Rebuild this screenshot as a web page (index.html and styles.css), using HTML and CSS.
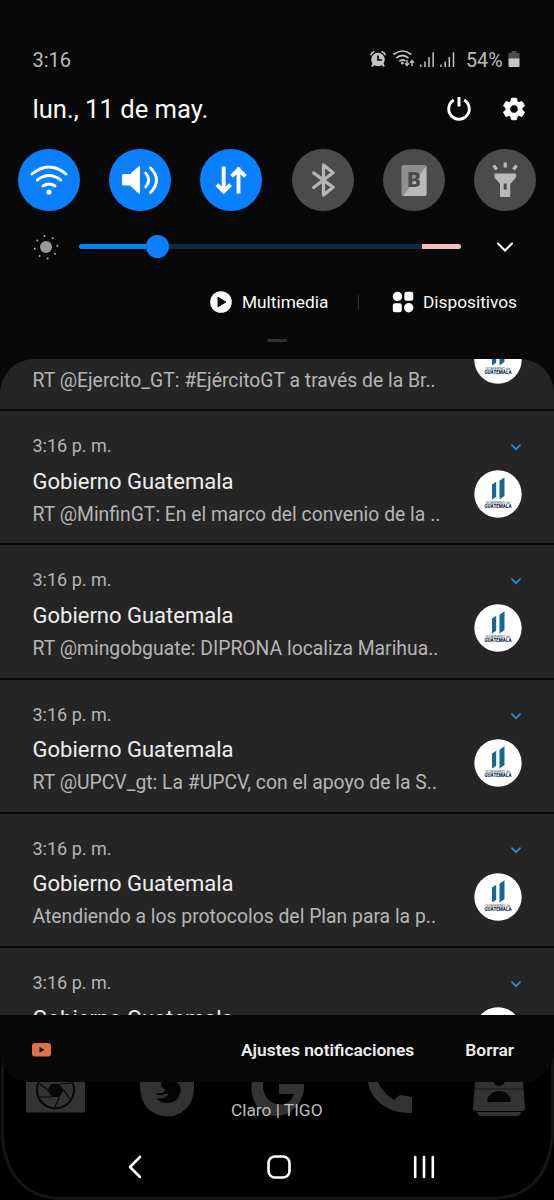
FILE: index.html
```html
<!DOCTYPE html>
<html lang="es">
<head>
<meta charset="utf-8">
<title>Notificaciones</title>
<link rel="stylesheet" href="styles.css">
</head>
<body>
<svg class="defs" width="0" height="0">
  <symbol id="avatar" viewBox="0 0 48 48">
    <circle cx="24" cy="24" r="23.7" fill="#fff"/>
    <path d="M18 14.500l4.200-2.700v15l-4.200 2.700zM25.500 10.700l5-3.400v18.800l-5 3.400z" fill="#17688f"/>
    <text x="11.500" y="34.200" font-size="3.800" textLength="25" lengthAdjust="spacingAndGlyphs" fill="#3f5066">GOBIERNO de</text>
    <text x="10.500" y="38.200" font-size="5" font-weight="900" textLength="27" lengthAdjust="spacingAndGlyphs" fill="#17314f">GUATEMALA</text>
  </symbol>
  <symbol id="chev" viewBox="0 0 12 8"><path d="M1.400 1.700L6 6.200l4.600-4.500" fill="none" stroke="#1f8fd6" stroke-width="1.800"/></symbol>
</svg>
<div class="phone">
  <header class="status">
    <span class="clock">3:16</span>
    <div class="status-icons">
      <svg width="98" height="20" viewBox="368 50 98 20">
        <g fill="#c4c4c4">
          <circle cx="378" cy="59.500" r="6.800"/>
          <path d="M372.500 63l2.200 2-2.400 2-1-1zM383.500 63l-2.200 2 2.400 2 1-1z"/>
        </g>
        <path d="M370.600 55.300q.8-2.800 3.800-3.700M385.400 55.300q-.8-2.800-3.800-3.700" stroke="#c4c4c4" stroke-width="1.600" fill="none"/>
        <path d="M378 55.500v4.500h4" stroke="#080808" stroke-width="1.700" fill="none"/>
        <g fill="none" stroke="#c4c4c4" stroke-width="1.700">
          <path d="M393.500 54.500q9-7 17.800 0M396.300 58q6.200-5 12.200 0M399.300 61.300q3.200-2.500 6.200-.2"/>
        </g>
        <circle cx="402.300" cy="63" r="1.400" fill="#c4c4c4"/>
        <path d="M407 60v5.300m-2-2l2 2.200 2-2.200M412 66v-5.300m-2 2l2-2.200 2 2.200" stroke="#c4c4c4" stroke-width="1.400" fill="none"/>
        <path d="M420.800 67v-2.500M425 67v-5.500M429 67V57M433.200 67V52.200M441 67v-2.500M445.200 67v-5.500M449.300 67V57M453.500 67V52.200" stroke="#c4c4c4" stroke-width="1.500"/>
      </svg>
      <span class="percent">54%</span>
      <svg class="battery" width="12" height="17" viewBox="0 0 12 17"><path d="M3.500 0h5v2h3v6H.5V2h3z" fill="#4c4c4c"/><path d="M.5 7.500h11v7.500q0 1-1 1h-9q-1 0-1-1z" fill="#c6c6c6"/></svg>
    </div>
  </header>
  <div class="date-row">
    <span class="date">lun., 11 de may.</span>
    <svg class="power" width="26" height="26" viewBox="0 0 26 26"><path d="M7.800 4A10.300 10.300 0 1 0 18.200 4" fill="none" stroke="#fff" stroke-width="2.900"/><path d="M13 1v9.500" stroke="#fff" stroke-width="3"/></svg>
    <svg class="gear" width="24" height="24" viewBox="1.300 1.300 21.400 21.400"><path d="M19.140 12.940c.04-.3.060-.61.060-.94s-.02-.64-.07-.94l2.030-1.580c.18-.14.23-.41.120-.61l-1.920-3.320c-.12-.22-.37-.29-.59-.22l-2.390.96c-.5-.38-1.030-.7-1.620-.94l-.36-2.540c-.04-.24-.24-.41-.48-.41h-3.840c-.24 0-.43.17-.47.41l-.36 2.540c-.59.24-1.130.57-1.620.94l-2.390-.96c-.22-.08-.47 0-.59.22L2.740 8.870c-.12.210-.08.470.12.610l2.030 1.580c-.05.3-.09.630-.09.940s.02.640.070.940l-2.030 1.580c-.18.140-.23.410-.12.610l1.920 3.320c.12.220.370.290.590.220l2.390-.96c.5.380 1.030.7 1.620.94l.36 2.540c.05.240.240.410.480.410h3.840c.24 0 .44-.17.470-.41l.36-2.540c.59-.24 1.130-.56 1.620-.94l2.390.96c.22.080.470 0 .59-.22l1.920-3.320c.12-.22.070-.47-.12-.61zM12 15.800a3.800 3.800 0 1 1 0-7.600 3.800 3.800 0 0 1 0 7.600z" fill="#fff" stroke="#fff" stroke-width=".8"/></svg>
  </div>
  <div class="toggles">
    <div class="toggle on"><svg viewBox="0 0 62 62"><path d="M14 25q17-14 34 0M19.300 31q11.700-9 23.400 0M25 37q6-4 12 0" fill="none" stroke="#fff" stroke-width="2.900" stroke-linecap="round"/><circle cx="31" cy="43" r="2.600" fill="#fff"/></svg></div>
    <div class="toggle on"><svg viewBox="0 0 62 62"><path d="M14.500 25h6.500l8.500-7.500q1.500-1 1.500.5v26q0 1.500-1.500.5L21 36.500h-6.500q-1.500 0-1.500-1.500v-8.500q0-1.500 1.500-1.500z" fill="#fff"/><path d="M36.700 24q6 7 0 14M41.500 19q12 12 0 24.500" fill="none" stroke="#fff" stroke-width="2.800" stroke-linecap="round"/></svg></div>
    <div class="toggle on"><svg viewBox="0 0 62 62"><path d="M23.700 19.500v22M18.200 37l5.500 5.500 5.500-5.500M38.500 42.500v-22M33 26l5.500-5.500 5.500 5.500" fill="none" stroke="#fff" stroke-width="3.900" stroke-linecap="square"/></svg></div>
    <div class="toggle"><svg viewBox="0 0 62 62"><path d="M21.700 24L41 38.200 31.500 46V16L41 23.700 21.700 38.500" fill="none" stroke="#b5b5b5" stroke-width="3.300" stroke-linecap="round" stroke-linejoin="round"/></svg></div>
    <div class="toggle"><svg viewBox="0 0 62 62"><rect x="18.500" y="16" width="25" height="31" rx="2" fill="#8f8f8f"/><path d="M43.500 17v28q0 2-2 2H20z" fill="#b9b9b9"/><text x="31" y="38" text-anchor="middle" font-size="21" font-weight="900" fill="#4b4b4b">B</text></svg></div>
    <div class="toggle"><svg viewBox="0 0 62 62"><path d="M20.500 24.500h21.500v4l-5.700 6.500v12q0 1-1 1h-8.300q-1 0-1-1V35l-5.500-6.500z" fill="#b9b9b9"/><path d="M31.200 34.500v6" stroke="#4b4b4b" stroke-width="3"/><path d="M31.200 13.500v5M19.700 16.500l3 4M42.500 16.500l-3 4" stroke="#b9b9b9" stroke-width="3.200"/></svg></div>
  </div>
  <div class="brightness">
    <svg class="sun" width="30" height="30" viewBox="0 0 30 30"><circle cx="15" cy="15" r="6" fill="#999"/><g fill="#b0b0b0"><circle cx="13.500" cy="4" r="1"/><circle cx="21.700" cy="6.300" r="1"/><circle cx="26.400" cy="13.800" r="1"/><circle cx="24" cy="21.800" r="1"/><circle cx="16.600" cy="26.500" r="1"/><circle cx="8.600" cy="24" r="1"/><circle cx="3.800" cy="16.700" r="1"/><circle cx="6.300" cy="8.500" r="1"/></g></svg>
    <div class="track"><div class="fill"></div><div class="knob"></div><div class="rest"></div><div class="hot"></div></div>
    <svg class="expand" width="18" height="12" viewBox="0 0 18 12"><path d="M2 2.500l7 7 7-7" fill="none" stroke="#fff" stroke-width="2" stroke-linecap="round"/></svg>
  </div>
  <div class="shortcuts">
    <svg width="22" height="22" viewBox="0 0 22 22"><circle cx="11" cy="11" r="10.800" fill="#fff"/><path d="M8 6.200v9.600l7.800-4.800z" fill="#080808" stroke="#080808" stroke-linejoin="round"/></svg>
    <span class="multi">Multimedia</span>
    <i class="divider"></i>
    <svg width="22" height="22" viewBox="0 0 22 22"><g fill="#fff"><circle cx="5.500" cy="5.500" r="4.700"/><rect x="12.300" y=".8" width="9" height="9" rx="2.300"/><rect x=".8" y="12.300" width="9" height="9" rx="2.300"/><circle cx="16.700" cy="16.700" r="4.700"/></g></svg>
    <span class="devices">Dispositivos</span>
  </div>
  <div class="handle-row"><i class="handle"></i></div>

  <main class="list">
    <article class="item first">
      <div class="copy"><p class="body">RT @Ejercito_GT: #EjércitoGT a través de la Br..</p></div>
      <svg class="avatar"><use href="#avatar"/></svg>
    </article>
    <article class="item">
      <div class="copy"><p class="time">3:16 p. m.</p><h2>Gobierno Guatemala</h2><p class="body">RT @MinfinGT: En el marco del convenio de la ..</p></div>
      <div class="side"><svg class="chev"><use href="#chev"/></svg><svg class="avatar"><use href="#avatar"/></svg></div>
    </article>
    <article class="item">
      <div class="copy"><p class="time">3:16 p. m.</p><h2>Gobierno Guatemala</h2><p class="body">RT @mingobguate: DIPRONA localiza Marihua..</p></div>
      <div class="side"><svg class="chev"><use href="#chev"/></svg><svg class="avatar"><use href="#avatar"/></svg></div>
    </article>
    <article class="item">
      <div class="copy"><p class="time">3:16 p. m.</p><h2>Gobierno Guatemala</h2><p class="body">RT @UPCV_gt: La #UPCV, con el apoyo de la S..</p></div>
      <div class="side"><svg class="chev"><use href="#chev"/></svg><svg class="avatar"><use href="#avatar"/></svg></div>
    </article>
    <article class="item">
      <div class="copy"><p class="time">3:16 p. m.</p><h2>Gobierno Guatemala</h2><p class="body">Atendiendo a los protocolos del Plan para la p..</p></div>
      <div class="side"><svg class="chev"><use href="#chev"/></svg><svg class="avatar"><use href="#avatar"/></svg></div>
    </article>
    <article class="item">
      <div class="copy"><p class="time">3:16 p. m.</p><h2>Gobierno Guatemala</h2></div>
      <div class="side"><svg class="chev"><use href="#chev"/></svg><svg class="avatar"><use href="#avatar"/></svg></div>
    </article>
  </main>

  <section class="bottom">
    <svg class="frame" width="554" height="185" viewBox="0 0 554 185"><path d="M2.500 30V122C5 160 25 182 60 183.500H494C529 182 549 160 552.500 122V30" fill="none" stroke="#131517" stroke-width="3"/></svg>
    <footer class="actions">
      <svg width="19" height="14" viewBox="0 0 19 14"><rect width="19" height="13.500" rx="3" fill="#e0704a"/><path d="M7.500 4v5.600l5-2.800z" fill="#080808"/></svg>
      <span class="settings">Ajustes notificaciones</span>
      <span class="clear">Borrar</span>
    </footer>
    <div class="dock">
      <svg width="60" height="36" viewBox="0 0 60 36"><path d="M1 0h59v30.500H1z" fill="#333"/><circle cx="30.500" cy="8" r="18.500" fill="none" stroke="#080808" stroke-width="2"/><path d="M26.500 2h8l4 6-4 7h-8l-4-7z" fill="#080808"/><path d="M34.500 15l-5 11M26.500 15h-12M22.500 8l-7-6M38.500 8l8 11M34.500 2l12-1" stroke="#080808" stroke-width="1.200"/></svg>
      <svg class="fox" width="56" height="36" viewBox="0 0 56 36"><path d="M1 0h54q1 12-4 22-9 13-24 12.500Q3 32 1 6z" fill="#333"/><path d="M22 0h16q5 5 3 12-3 9-13 9-7 0-11-5 8 2 13-4-4-1-7 1-5 1-6-2h7l3-4q-6 0-5-7z" fill="#040404"/></svg>
      <svg class="goo" width="56" height="36" viewBox="0 0 56 36"><path d="M1 0h11q-1 13 7 19 10 7 20 0 3-3 4-7H28V2h25q1 13-8 23-9 9-21 9Q10 33 4 21-1 11 1 0z" fill="#333"/></svg>
      <svg class="call" width="46" height="36" viewBox="0 0 46 36"><path d="M0 0h10q5 11 16 18l6-5 12 2v16Q20 32 6 15 1 8 0 0z" fill="#333"/></svg>
      <svg class="box" width="54" height="36" viewBox="0 0 54 36"><path d="M3 0h18q3 4 6 4t6-4h18l2 26q0 3-3 3H4q-4 0-3-3z" fill="#333"/><path d="M5 30h44q-1 4-4 4H9q-3 0-4-4z" fill="#333"/><path d="M2 7h50" stroke="#171717"/><path d="M15.500 20V16q4-7 11.500-7 8 0 11.500 7v4z" fill="#060606"/></svg>
    </div>
    <span class="carrier">Claro | TIGO</span>
    <nav class="nav">
      <svg width="14" height="24" viewBox="0 0 14 24"><path d="M12 2L2 12l10 10" fill="none" stroke="#fff" stroke-width="2.600" stroke-linecap="round" stroke-linejoin="round"/></svg>
      <svg class="home" width="24" height="24" viewBox="0 0 24 24"><rect x="1.500" y="1.500" width="21" height="21" rx="6.500" fill="none" stroke="#fff" stroke-width="2.600"/></svg>
      <svg width="22" height="24" viewBox="0 0 22 24"><path d="M2.200 2v20M11 2v20M19.800 2v20" stroke="#fff" stroke-width="2.600" stroke-linecap="round"/></svg>
    </nav>
  </section>
</div>
</body>
</html>
```
FILE: styles.css
```css
* { box-sizing: border-box; }
body { margin: 0; background: #080808; font-family: Roboto, sans-serif; }
p, h2 { margin: 0; font-weight: 400; }
svg { display: block; flex: none; }
.defs { position: absolute; }
.phone { width: 554px; height: 1200px; overflow: hidden; display: flex; flex-direction: column; background: #080808; color: #fafafa; white-space: nowrap; }
.status { height: 80px; padding: 40px 34px 0 32.5px; display: flex; align-items: center; justify-content: space-between; color: #bdbdbd; font-size: 20px; }
.status-icons { display: flex; align-items: center; width: 152px; }
.percent { width: 42px; font-size: 19.7px; }
.battery { margin-top: -2px; }
.date-row { height: 60px; padding: 0 28px 2px 32.5px; display: flex; align-items: center; }
.date { flex: 1; font-size: 25.6px; }
.power { margin-right: 30px; }
.toggles { height: 80px; padding: 9px 18px 0; display: flex; justify-content: space-between; }
.toggle { width: 62px; height: 62px; border-radius: 50%; background: #4b4b4b; }
.toggle.on { background: #0a80ff; }
.brightness { height: 54px; padding: 0 40px 1px 31px; display: flex; align-items: center; }
.track { width: 382px; height: 24px; margin: 0 35px 0 18px; display: flex; align-items: center; }
.fill { width: 67px; height: 5px; background: #0a80ff; border-radius: 3px 0 0 3px; }
.knob { width: 23px; height: 23px; border-radius: 50%; background: #0a80ff; }
.rest { flex: 1; height: 5px; background: #092b49; }
.hot { width: 39px; height: 5px; background: #f6bdbd; border-radius: 0 3px 3px 0; }
.shortcuts { height: 58px; padding: 0 0 2px 210px; display: flex; align-items: center; font-size: 17.3px; }
.multi { width: 116px; margin-left: 10px; }
.divider { width: 1px; height: 15px; margin-right: 33px; background: #303030; }
.devices { margin-left: 9px; }
.handle-row { height: 27px; padding: 7px 0 0 267px; }
.handle { display: block; width: 20px; height: 3px; background: #303030; border-radius: 2px; }
.list { height: 656px; overflow: hidden; background: #252525; border-radius: 34px 34px 0 0; }
.item { height: 134.3px; padding: 0 32px 0 32.5px; display: flex; justify-content: space-between; border-bottom: 2px solid #080808; }
.item.first { height: 52px; overflow: hidden; align-items: flex-end; }
.first .copy { padding: 0 0 15.5px; }
.first .avatar { margin-bottom: 25px; }
.copy { padding-top: 24px; color: #b6b6b6; }
.time { height: 22px; line-height: 22px; font-size: 18px; }
h2 { height: 30px; margin-top: 9.6px; line-height: 30px; font-size: 22px; color: #eee; }
.body { height: 26px; margin-top: 5px; line-height: 26px; font-size: 19.35px; }
.side { display: flex; flex-direction: column; align-items: flex-end; padding-top: 32px; }
.chev { width: 12px; height: 8px; }
.avatar { width: 48px; height: 48px; }
.side .avatar { margin-top: 19.2px; }
.bottom { position: relative; height: 185px; background: #000; }
.frame { position: absolute; left: 0; top: 0; }
.actions { position: relative; height: 67px; padding: 2px 40px 0 32px; display: flex; align-items: center; background: #080808; border-radius: 0 0 30px 30px; font-size: 17.4px; font-weight: 600; color: #eee; }
.settings { margin-left: auto; }
.clear { margin-left: 51px; }
.dock { height: 50px; padding-left: 24.5px; display: flex; }
.fox { margin-left: 54px; }
.goo { margin-left: 56px; }
.call { margin-left: 61px; }
.box { margin-left: 58px; }
.carrier { position: absolute; left: 231px; top: 84px; font-size: 17.3px; line-height: 22px; color: #bdbdbd; }
.nav { padding: 23px 119px 0 128px; display: flex; justify-content: space-between; }
.home { margin-left: 3px; }
```
